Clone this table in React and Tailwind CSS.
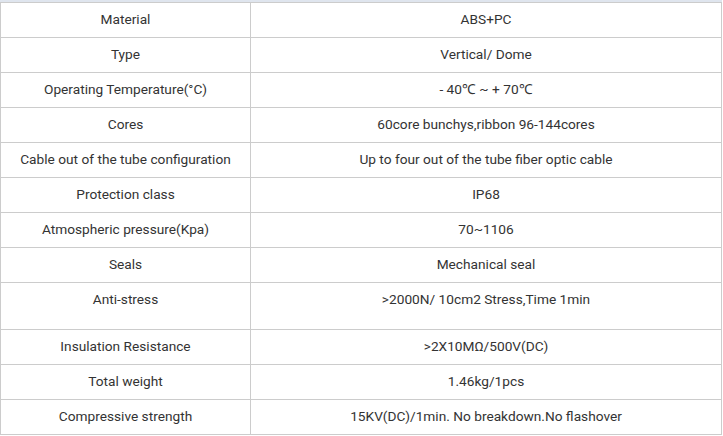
import React from 'react';

const ROWS = [
  ['Material', 'ABS+PC'],
  ['Type', 'Vertical/ Dome'],
  ['Operating Temperature(°C)', '- 40℃ ~ + 70℃'],
  ['Cores', '60core bunchys,ribbon 96-144cores'],
  ['Cable out of the tube configuration', 'Up to four out of the tube fiber optic cable'],
  ['Protection class', 'IP68'],
  ['Atmospheric pressure(Kpa)', '70~1106'],
  ['Seals', 'Mechanical seal'],
  ['Anti-stress', '>2000N/ 10cm2 Stress,Time 1min', true],
  ['Insulation Resistance', '>2X10MΩ/500V(DC)'],
  ['Total weight', '1.46kg/1pcs'],
  ['Compressive strength', '15KV(DC)/1min. No breakdown.No flashover'],
];

export default function App() {
  return (
    <div className="w-[723px] h-[436px] bg-white text-[#333] text-[13.7px]" style={{ fontFamily: 'Roboto, "Liberation Sans", sans-serif' }}>
      <div className="h-[2px] w-[722px] bg-[#dfe5ee]" />
      <table className="w-[722px] border-collapse table-fixed">
        <colgroup>
          <col className="w-[250px]" />
          <col />
        </colgroup>
        <tbody>
          {ROWS.map(([k, v, tall]) => (
            <tr key={k} className={tall ? 'h-[47px]' : 'h-[35px]'}>
              <td className={`border border-[#ccc] text-center px-1 leading-[18px] ${tall ? 'align-top pt-[7px]' : 'align-middle pb-[2px]'}`}>{k}</td>
              <td className={`border border-[#ccc] text-center px-1 leading-[18px] ${tall ? 'align-top pt-[7px]' : 'align-middle pb-[2px]'}`}>{v}</td>
            </tr>
          ))}
        </tbody>
      </table>
    </div>
  );
}
